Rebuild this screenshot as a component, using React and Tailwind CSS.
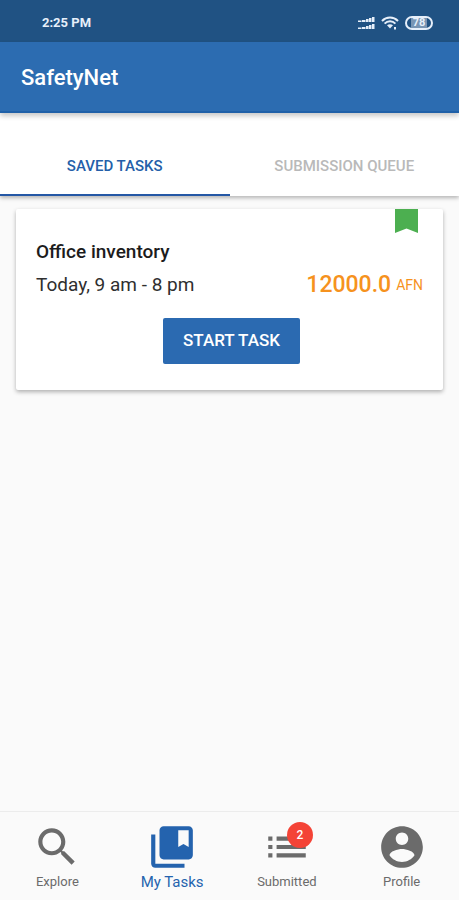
import React, { useState } from "react";

const tabs = ["SAVED TASKS", "SUBMISSION QUEUE"];

const navItems = [
  {
    name: "Explore",
    path: "M15.5 14h-.79l-.28-.27C15.41 12.59 16 11.11 16 9.5 16 5.91 13.09 3 9.5 3S3 5.91 3 9.5 5.91 16 9.5 16c1.61 0 3.09-.59 4.23-1.57l.27.28v.79l5 4.99L20.49 19l-4.99-5zm-6 0C7.01 14 5 11.99 5 9.5S7.01 5 9.5 5 14 7.01 14 9.5 11.99 14 9.5 14z",
  },
  {
    name: "My Tasks",
    path: "M4 6H2v14c0 1.1.9 2 2 2h14v-2H4V6zm16-4H8c-1.1 0-2 .9-2 2v12c0 1.1.9 2 2 2h12c1.1 0 2-.9 2-2V4c0-1.1-.9-2-2-2zm0 10l-2.5-1.5L15 12V4h5v8z",
  },
  {
    name: "Submitted",
    badge: 2,
    path: "M3 13h2v-2H3v2zm0 4h2v-2H3v2zm0-8h2V7H3v2zm4 4h14v-2H7v2zm0 4h14v-2H7v2zM7 7v2h14V7H7z",
  },
  {
    name: "Profile",
    path: "M12 2C6.48 2 2 6.48 2 12s4.48 10 10 10 10-4.48 10-10S17.52 2 12 2zm0 3c1.66 0 3 1.34 3 3s-1.34 3-3 3-3-1.34-3-3 1.34-3 3-3zm0 14.2c-2.5 0-4.71-1.28-6-3.22.03-1.99 4-3.08 6-3.08 1.99 0 5.97 1.09 6 3.08-1.29 1.94-3.5 3.22-6 3.22z",
  },
];

const StatusBar = () => {
  return (
    <div className="h-[42px] bg-[#205283] flex items-center justify-between pl-[42px] pr-[26px] pt-1 text-[#e6effa]">
      <span className="text-[13px] font-bold">2:25 PM</span>
      <div className="flex items-center gap-[6px]">
        <svg width="17" height="14" viewBox="0 0 17 14" fill="currentColor" aria-hidden="true">
          <path d="M0 4.500h3.500V6H0zM4 4h3.500v2H4zM8 3h2.600v3H8zM11 2h2.500v4H11zM14 1h2.500v5H14z" />
          <path d="M0 11.500h3.500V13H0zM4 11h3.500v2H4zM8 10h2.600v3H8zM11 9h2.500v4H11zM14 8h2.500v5H14z" />
        </svg>
        <svg width="18" height="14" viewBox="0 0 18 14" fill="none" stroke="currentColor" strokeWidth="2" aria-hidden="true">
          <path d="M1 5C5.5.4 12.5.4 17 5" />
          <path d="M3.6 7.6c3-3 7.800-3 10.800 0" />
          <path d="M6 9.300c1.800-1.500 4.200-1.500 6 0L9 12.500z" fill="currentColor" stroke="none" />
          <path d="M14 11v2.500" />
        </svg>
        <span className="w-[28px] h-[14px] rounded-full border-2 border-current flex items-center justify-center">
          <span className="bg-[#7895b4] px-[2px] text-[11px] leading-[10px] font-bold">78</span>
        </span>
      </div>
    </div>
  );
};

const TaskCard = ({ title, time, price, currency }) => {
  return (
    <article className="relative bg-white rounded-[2px] px-5 pt-[31px] pb-[26px] shadow-[0_2px_4px_rgba(0,0,0,0.3)]">
      <svg
        className="absolute top-0 right-[25px]"
        width="23"
        height="24"
        viewBox="0 0 23 24"
        fill="#4caf50"
        role="img"
        aria-label="Saved"
      >
        <path d="M0 0h23v24l-11.500-4.500L0 24z" />
      </svg>
      <h2 className="text-[19px] leading-6 font-medium text-[#1c1c1c]">{title}</h2>
      <div className="flex items-center justify-between mt-[6px] leading-[30px]">
        <p className="text-[19px] text-[#2f2f2f]">{time}</p>
        <p className="text-[#f6921e] flex items-center gap-[5px]">
          <span className="text-[23px] font-medium">{price}</span>
          <span className="text-[14px]">{currency}</span>
        </p>
      </div>
      <div className="flex justify-center mt-[18px] pl-1">
        <button
          type="button"
          className="h-[46px] px-5 bg-[#2b6ab1] rounded-[2px] text-white text-[17px] font-medium"
        >
          START TASK
        </button>
      </div>
    </article>
  );
};

const BottomNav = ({ active, onChange }) => {
  return (
    <nav className="h-[89px] grid grid-cols-4 border-t border-[#ececec] bg-[#fafafa]">
      {navItems.map((item) => (
        <button
          key={item.name}
          type="button"
          onClick={() => onChange(item.name)}
          className={`flex flex-col items-center pt-[10px] ${
            active === item.name ? "text-[#2463ae]" : "text-[#6b6b6b]"
          }`}
        >
          <span className="relative">
            <svg width="50" height="50" viewBox="0 0 24 24" fill="currentColor" aria-hidden="true">
              <path d={item.path} />
            </svg>
            {item.badge && (
              <span className="absolute top-0 right-0 -mr-[1px] size-[26px] rounded-full bg-[#f44336] text-white text-[12px] font-medium flex items-center justify-center">
                {item.badge}
              </span>
            )}
          </span>
          <span
            className={`leading-5 ${active === item.name ? "text-[15px]" : "text-[13px]"}`}
          >
            {item.name}
          </span>
        </button>
      ))}
    </nav>
  );
};

const App = () => {
  const [tab, setTab] = useState(tabs[0]);
  const [page, setPage] = useState("My Tasks");

  return (
    <div className="min-h-screen flex flex-col bg-[#fafafa] font-[Roboto,sans-serif]">
      <StatusBar />
      <header className="relative h-[71px] bg-[#2c6cb1] border-b-2 border-[#1f60a8] flex items-center px-[21px] pt-[2px] shadow-[0_3px_5px_rgba(0,0,0,0.22)]">
        <h1 className="text-white text-[22px] font-medium">SafetyNet</h1>
      </header>
      <div className="grid grid-cols-2 pt-[23px] bg-white shadow-[0_2px_4px_rgba(0,0,0,0.28)]" role="tablist">
        {tabs.map((name) => (
          <button
            key={name}
            type="button"
            role="tab"
            aria-selected={tab === name}
            onClick={() => setTab(name)}
            className={`h-[60px] pt-[2px] border-b-2 text-[15px] font-medium ${
              tab === name
                ? "text-[#245fa9] border-[#2457a5]"
                : "text-[#b9b9b9] border-transparent"
            }`}
          >
            {name}
          </button>
        ))}
      </div>
      <main className="flex-1 px-4 pt-[13px]">
        <TaskCard
          title="Office inventory"
          time="Today, 9 am - 8 pm"
          price="12000.0"
          currency="AFN"
        />
      </main>
      <BottomNav active={page} onChange={setPage} />
    </div>
  );
};

export default App;
